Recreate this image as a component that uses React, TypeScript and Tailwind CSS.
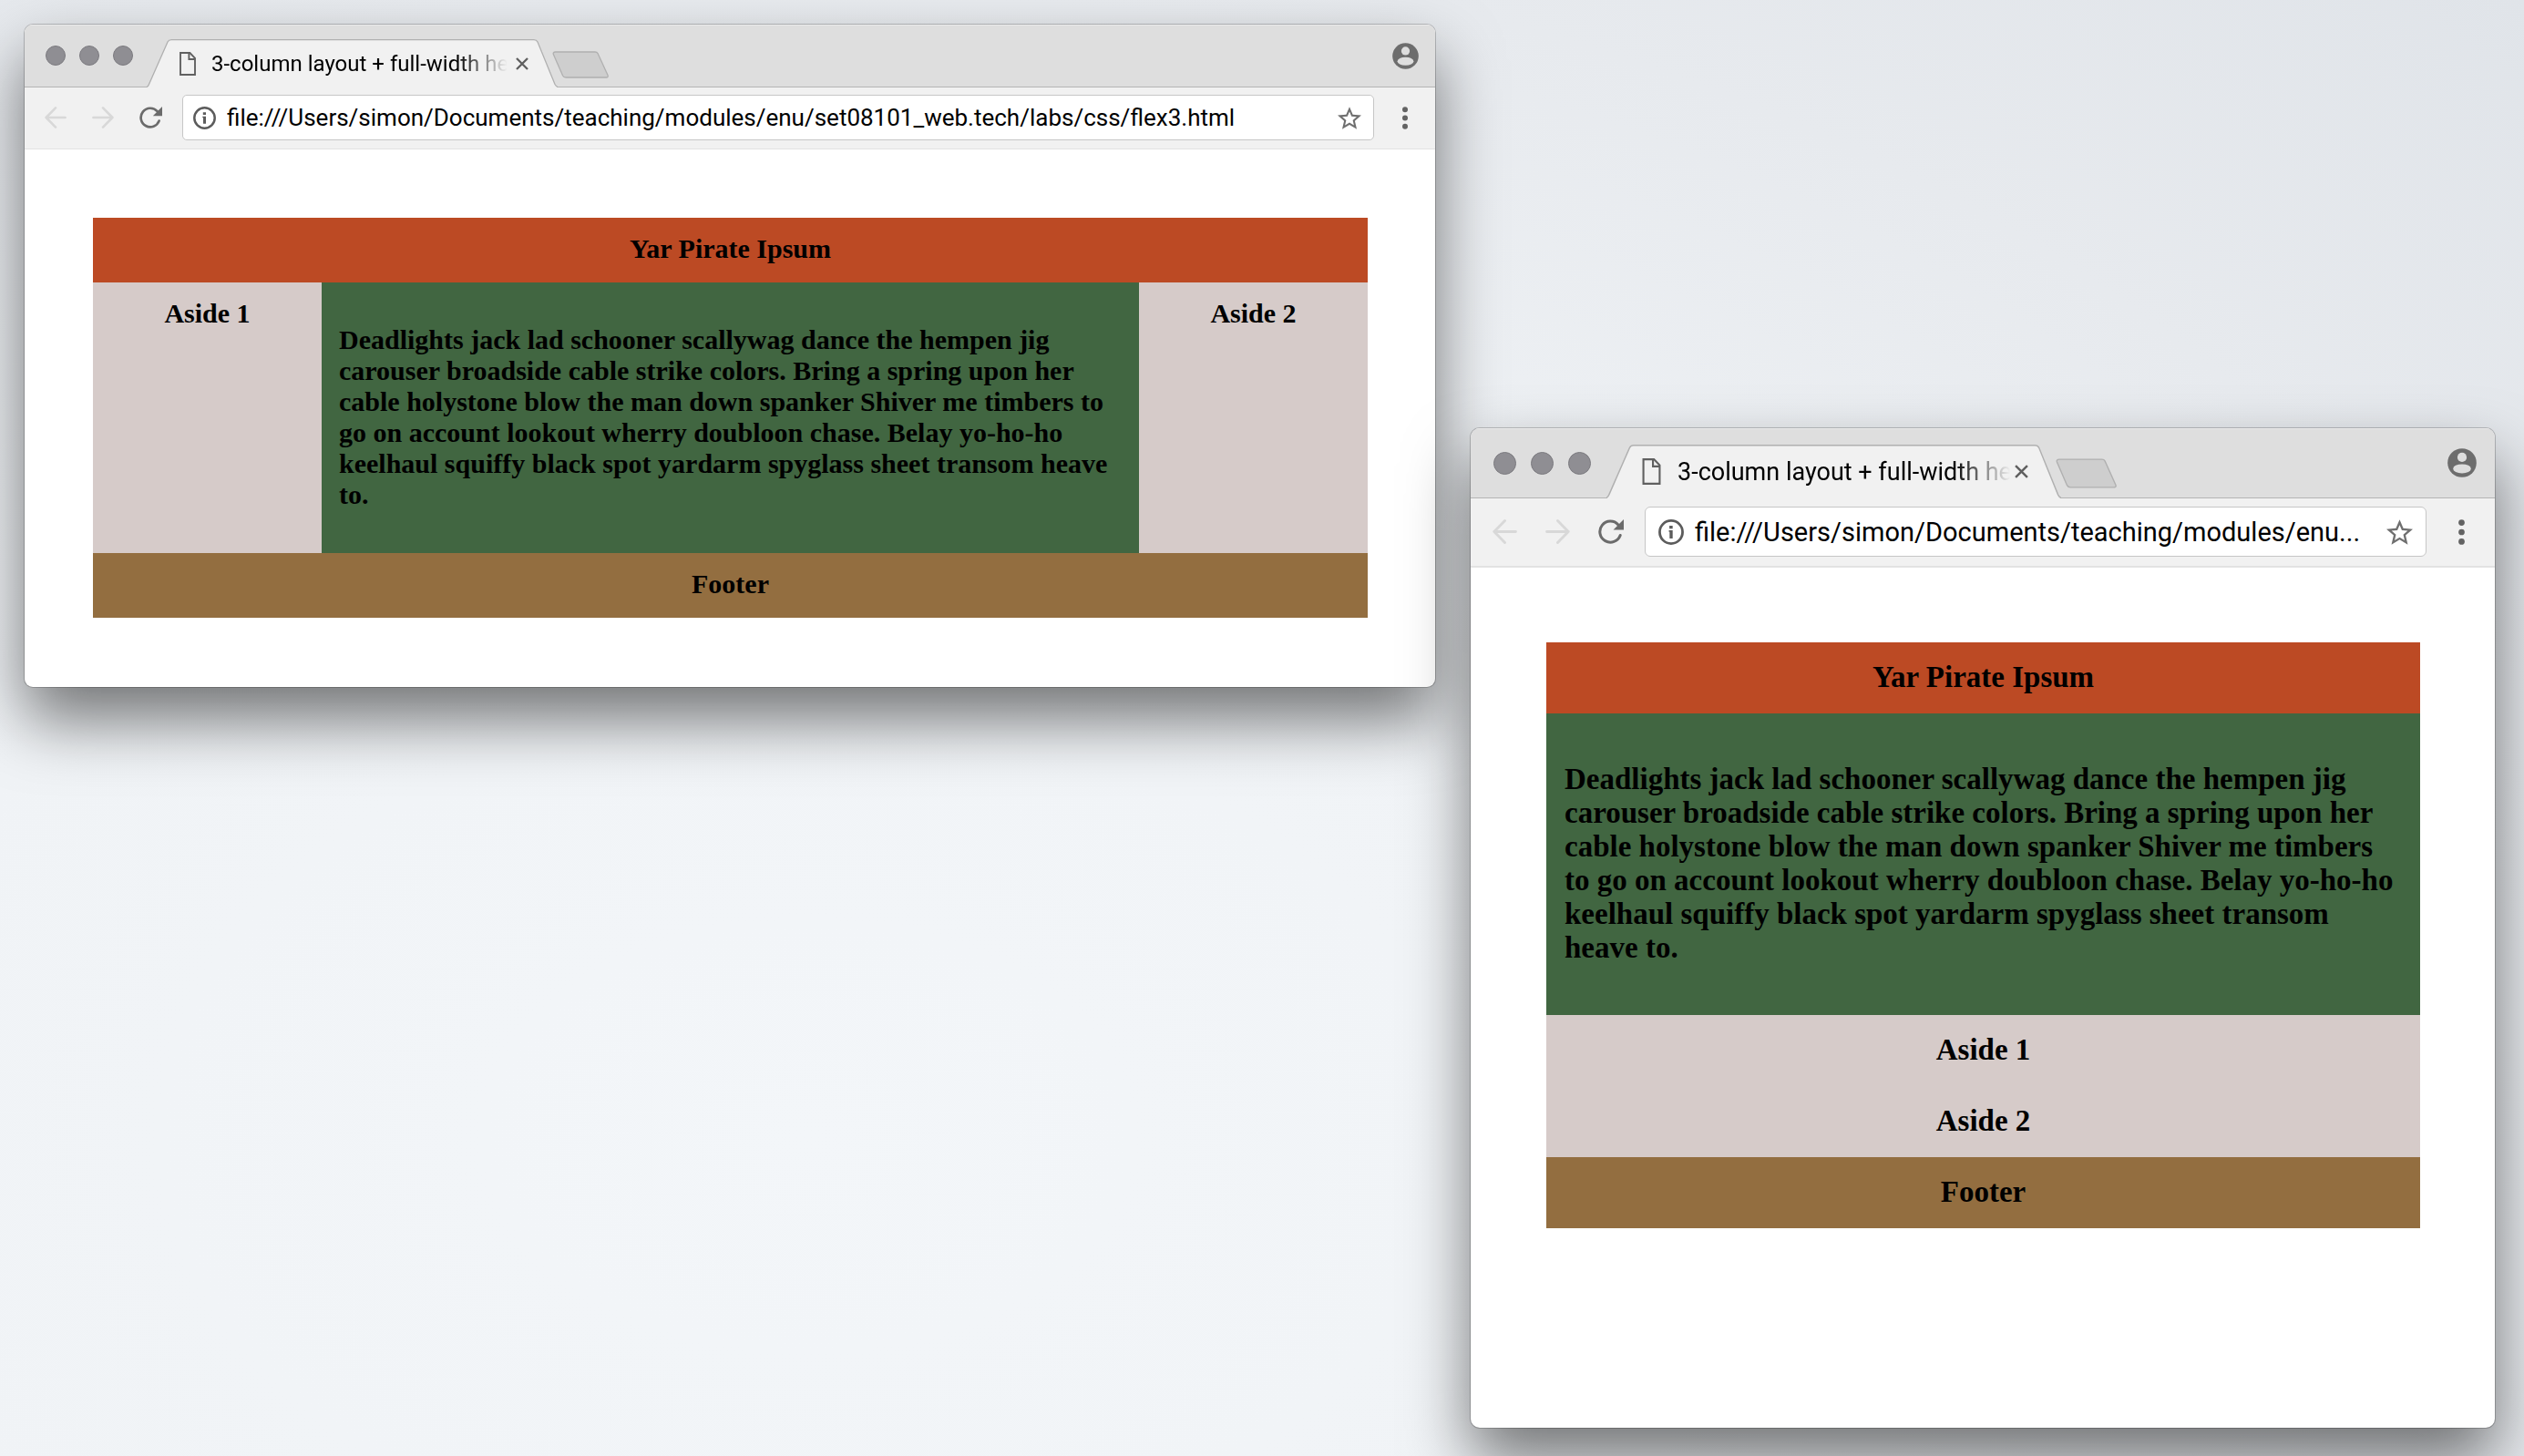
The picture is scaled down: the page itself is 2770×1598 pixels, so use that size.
import clsx from 'clsx'
import type { ReactNode } from 'react'

type Size = 'regular' | 'large'

const STORY =
  'Deadlights jack lad schooner scallywag dance the hempen jig carouser broadside cable strike colors. Bring a spring upon her cable holystone blow the man down spanker Shiver me timbers to go on account lookout wherry doubloon chase. Belay yo-ho-ho keelhaul squiffy black spot yardarm spyglass sheet transom heave to.'

const chrome = {
  regular: {
    frame: 'rounded-[9px]',
    strip: 'h-[69px] pl-[23px] pr-[18px]',
    lights: 'gap-[15px]',
    light: 'size-[22px]',
    tab: 'ml-[15px] h-[53px] w-[451px] pl-[36px]',
    doc: 'h-[26px] w-[18px]',
    title: 'ml-[17px] mr-[6px] w-[328px] text-[24px] leading-[30px]',
    close: 'size-[14px]',
    newTab: '-ml-[6px] mb-[9px] h-[30px] w-[62px]',
    avatar: 'size-[29px]',
    toolbar: 'border-b pt-[8px] pb-[9px] pl-[22px] pr-[30px]',
    nav: 'mr-[28px] size-[24px]',
    reload: 'mr-[22px] h-[24px] w-[25px]',
    address: 'h-[50px] rounded-[5px] pl-[11px] pr-[13px]',
    info: 'size-[25px]',
    url: 'ml-[12px] text-[26px] leading-[32px]',
    star: 'h-[25px] w-[26px]',
    menu: 'ml-[31px] h-[25px] w-[6px]',
  },
  large: {
    frame: 'rounded-[10px]',
    strip: 'h-[77px] pl-[25px] pr-[20px]',
    lights: 'gap-[16px]',
    light: 'size-[25px]',
    tab: 'ml-[17px] h-[59px] w-[499px] pl-[39px]',
    doc: 'h-[29px] w-[21px]',
    title: 'ml-[18px] mr-px w-[369px] text-[27px] leading-[34px]',
    close: 'size-[15px]',
    newTab: '-ml-[6px] mb-[10px] h-[33px] w-[67px]',
    avatar: 'size-[32px]',
    toolbar: 'border-b-2 pt-[9px] pb-[10px] pl-[24px] pr-[33px]',
    nav: 'mr-[31px] size-[27px]',
    reload: 'mr-[23px] h-[27px] w-[28px]',
    address: 'h-[55px] rounded-[6px] pl-[14px] pr-[14px]',
    info: 'size-[28px]',
    url: 'ml-[12px] text-[29px] leading-[36px]',
    star: 'h-[28px] w-[29px]',
    menu: 'ml-[35px] h-[28px] w-[7px]',
  },
}

function ArrowIcon({ flip }: { flip?: boolean }) {
  return (
    <svg viewBox="0 0 24 24" className={clsx('size-full', flip && '-scale-x-100')} fill="none" stroke="#d8d8d8" strokeWidth="2.6" strokeLinecap="round" strokeLinejoin="round">
      <path d="M22.6 12H1.6M12 1.4 1.6 12 12 22.6" />
    </svg>
  )
}

function ReloadIcon() {
  return (
    <svg viewBox="0 0 25 24" className="size-full" fill="none">
      <path d="M19.6 5.2A10.3 10.3 0 1 0 21.6 15.6" stroke="#6b6b6b" strokeWidth="2.7" strokeLinecap="round" />
      <path d="M25 0V10.2H14.8Z" fill="#6b6b6b" />
    </svg>
  )
}

function InfoIcon() {
  return (
    <svg viewBox="0 0 25 25" className="size-full" fill="none">
      <circle cx="12.5" cy="12.5" r="11.2" stroke="#5c5c5c" strokeWidth="2.5" />
      <path d="M10.8 6.3h3.2v2.8h-3.2zM10.3 10.8H14v8h-3v-6.6h-.7z" fill="#5c5c5c" />
    </svg>
  )
}

function StarIcon() {
  return (
    <svg viewBox="2 2 20 19" className="size-full" fill="#6f6f6f">
      <path d="M22 9.24l-7.19-.62L12 2 9.19 8.63 2 9.24l5.46 4.73L5.82 21 12 17.27 18.18 21l-1.63-7.03L22 9.24zM12 15.4l-3.76 2.27 1-4.28-3.32-2.88 4.38-.38L12 6.1l1.71 4.04 4.38.38-3.32 2.88 1 4.28L12 15.4z" />
    </svg>
  )
}

function MenuIcon() {
  return (
    <svg viewBox="0 0 6 25" className="size-full" fill="#636363">
      <circle cx="3" cy="3.2" r="3" />
      <circle cx="3" cy="12.5" r="3" />
      <circle cx="3" cy="21.8" r="3" />
    </svg>
  )
}

function AvatarIcon() {
  return (
    <svg viewBox="0 0 32 32" className="size-full">
      <circle cx="16" cy="16" r="15.8" fill="#6d6d6d" />
      <circle cx="16" cy="9.9" r="5.1" fill="#dedede" />
      <ellipse cx="16" cy="22.4" rx="9.8" ry="5" fill="#dedede" />
    </svg>
  )
}

function PageIcon() {
  return (
    <svg viewBox="0 0 18 26" className="size-full" fill="none" stroke="#606060" strokeWidth="1.9">
      <path d="M1 1h10.4L17 6.8V25H1Z" />
      <path d="M10.4 1v7H17" />
    </svg>
  )
}

function CloseIcon() {
  return (
    <svg viewBox="0 0 14 14" className="size-full" stroke="#5f5f5f" strokeWidth="2.3">
      <path d="M1 1l12 12M13 1 1 13" />
    </svg>
  )
}

function TabShape() {
  return (
    <svg viewBox="0 0 451 53" preserveAspectRatio="none" className="absolute inset-0 size-full" aria-hidden="true">
      <path d="M0 53C1 52 2 51 2.500 49.500L23 3C24 1 25 .5 27 .5H425C427 .5 428 1 429 3L448 49.500C449 51.500 450 52.500 451 53Z" fill="#f1f1f1" />
      <path d="M0 52.500C1 52 2 51 2.500 49.500L23 3C24 1 25 .7 27 .7H425C427 .7 428 1 429 3L448 49.500C449 51.500 450 52 451 52.500" fill="none" stroke="#b0b0b0" strokeWidth="1.300" />
    </svg>
  )
}

function NewTabShape() {
  return (
    <svg viewBox="0 0 62 30" className="size-full" preserveAspectRatio="none">
      <path d="M3.500 1H47C48.500 1 49.500 1.600 50 2.600L61 26.500C61.500 28 61 29 59.500 29H15C13.500 29 12.300 28.300 11.600 27L1.300 3.600C.8 2.200 1.700 1 3.500 1Z" fill="#cecece" stroke="#b0b0b0" strokeWidth="1.300" />
    </svg>
  )
}

function BrowserWindow({ size, url, className, children }: { size: Size; url: string; className: string; children: ReactNode }) {
  const c = chrome[size]
  return (
    <section
      className={clsx(
        'flex min-w-0 basis-0 flex-col overflow-hidden bg-white shadow-[0_0_0_1px_rgba(0,0,0,0.2),0_36px_70px_rgba(0,0,0,0.52)]',
        c.frame,
        className,
      )}
    >
      <div className={clsx('flex items-end border-b border-[#b4b4b4] bg-[#dedede] shadow-[inset_0_1px_0_#eaeaea]', c.strip)}>
        <div className={clsx('flex self-center', c.lights)}>
          {['Close window', 'Minimise window', 'Zoom window'].map((label) => (
            <button key={label} aria-label={label} className={clsx('rounded-full border border-[#7b7a7f] bg-[#8f8e93]', c.light)} />
          ))}
        </div>
        <div className={clsx('relative -mb-px flex shrink-0 items-center', c.tab)}>
          <TabShape />
          <span className={clsx('relative shrink-0', c.doc)}>
            <PageIcon />
          </span>
          <span
            className={clsx(
              'relative shrink-0 whitespace-nowrap text-black [mask-image:linear-gradient(to_right,black_82%,transparent_99%)]',
              c.title,
            )}
          >
            3-column layout + full-width he
          </span>
          <button aria-label="Close tab" className={clsx('relative shrink-0', c.close)}>
            <CloseIcon />
          </button>
        </div>
        <button aria-label="New tab" className={clsx('relative shrink-0', c.newTab)}>
          <NewTabShape />
        </button>
        <button aria-label="Profile" className={clsx('ml-auto shrink-0 self-center', c.avatar)}>
          <AvatarIcon />
        </button>
      </div>

      <div className={clsx('flex items-center border-[#e2e2e2] bg-[#f1f1f1]', c.toolbar)}>
        <button aria-label="Back" className={clsx('shrink-0', c.nav)}>
          <ArrowIcon />
        </button>
        <button aria-label="Forward" className={clsx('shrink-0', c.nav)}>
          <ArrowIcon flip />
        </button>
        <button aria-label="Reload" className={clsx('shrink-0', c.reload)}>
          <ReloadIcon />
        </button>
        <div className={clsx('flex min-w-0 flex-1 items-center border border-[#c6c6c6] bg-white', c.address)}>
          <button aria-label="Site information" className={clsx('shrink-0', c.info)}>
            <InfoIcon />
          </button>
          <input aria-label="Address" type="text" defaultValue={url} className={clsx('min-w-0 flex-1 bg-transparent text-black outline-none', c.url)} />
          <button aria-label="Bookmark this page" className={clsx('shrink-0', c.star)}>
            <StarIcon />
          </button>
        </div>
        <button aria-label="Menu" className={clsx('shrink-0', c.menu)}>
          <MenuIcon />
        </button>
      </div>

      {children}
    </section>
  )
}

function WidePage() {
  return (
    <div className="pt-[75px] pr-[74px] pb-[76px] pl-[75px] text-center font-['Liberation_Serif',serif] text-[30px] leading-[34px] font-bold text-black">
      <header className="bg-[#bc4a24] pt-[17px] pb-[20px]">Yar Pirate Ipsum</header>
      <div className="grid grid-cols-[251fr_897fr_251fr]">
        <aside className="bg-[#d6cbc9] pt-[17px]">Aside 1</aside>
        <article className="bg-[#416641] px-[19px] pt-[46px] pb-[47px] text-left">
          <p>{STORY}</p>
        </article>
        <aside className="bg-[#d6cbc9] pt-[17px]">Aside 2</aside>
      </div>
      <footer className="bg-[#936e40] pt-[17px] pb-[20px]">Footer</footer>
    </div>
  )
}

function NarrowPage() {
  return (
    <div className="pt-[82px] pr-[82px] pb-[219px] pl-[83px] text-center font-['Liberation_Serif',serif] text-[33px] leading-[37px] font-bold text-black">
      <header className="bg-[#bc4a24] pt-[20px] pb-[21px]">Yar Pirate Ipsum</header>
      <article className="bg-[#416641] px-[20px] pt-[54px] pb-[55px] text-left">
        <p>{STORY}</p>
      </article>
      <aside className="bg-[#d6cbc9] pt-[20px] pb-[21px]">Aside 1</aside>
      <aside className="bg-[#d6cbc9] pt-[20px] pb-[21px]">Aside 2</aside>
      <footer className="bg-[#936e40] pt-[20px] pb-[21px]">Footer</footer>
    </div>
  )
}

export default function App() {
  return (
    <main className="flex min-h-screen items-start gap-[39px] overflow-hidden bg-[radial-gradient(ellipse_at_32%_78%,#f3f6f9_0%,#f0f3f6_40%,#e7eaee_75%,#e0e4e9_100%)] pt-[27px] pr-[32px] pb-[31px] pl-[27px] font-['Roboto',sans-serif]">
      <BrowserWindow size="regular" url="file:///Users/simon/Documents/teaching/modules/enu/set08101_web.tech/labs/css/flex3.html" className="grow-[1548]">
        <WidePage />
      </BrowserWindow>
      <BrowserWindow size="large" url="file:///Users/simon/Documents/teaching/modules/enu..." className="relative mt-[443px] grow-[1124]">
        <NarrowPage />
      </BrowserWindow>
    </main>
  )
}
